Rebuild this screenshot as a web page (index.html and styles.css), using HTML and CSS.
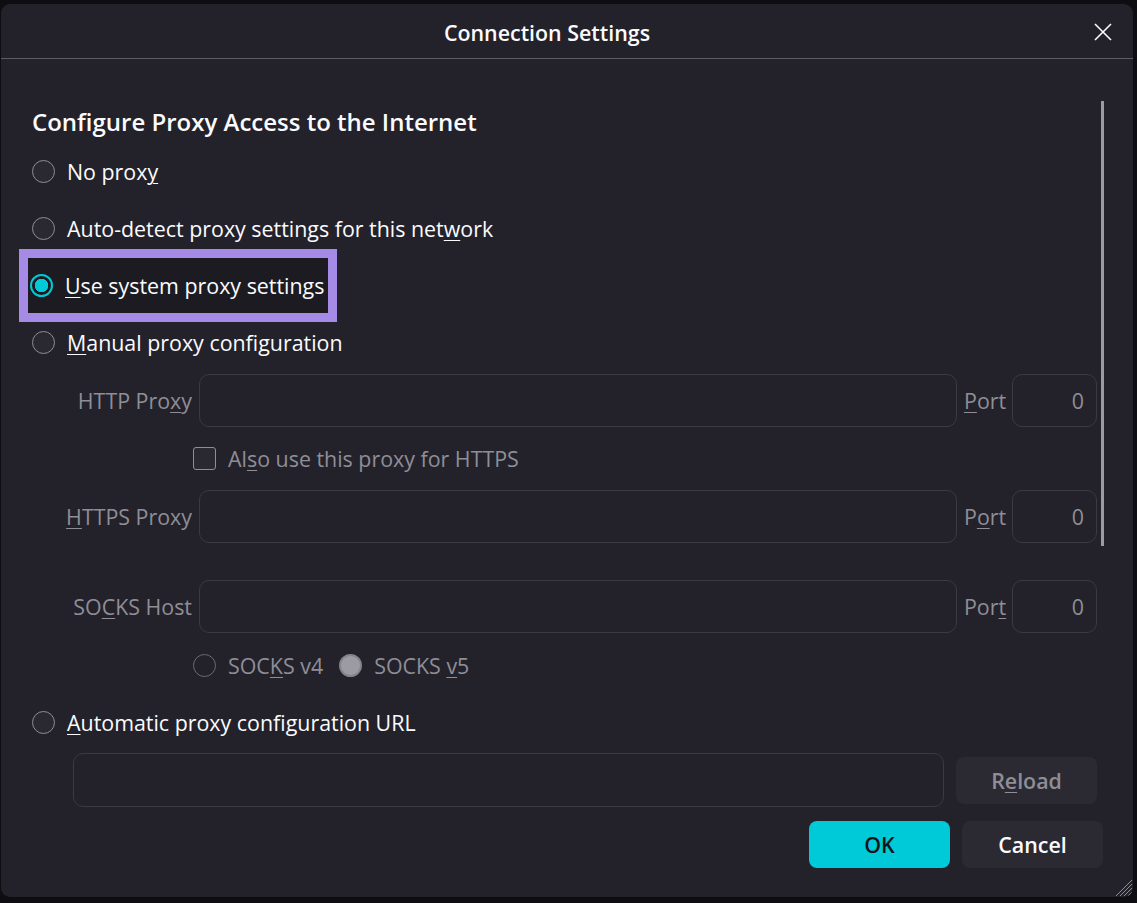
FILE: index.html
```html
<!DOCTYPE html>
<html lang="en">
<head>
<meta charset="utf-8">
<title>Connection Settings</title>
<link rel="stylesheet" href="styles.css">
</head>
<body>
<div class="dialog">
  <header class="titlebar">
    <h1 class="title">Connection Settings</h1>
    <button class="close" aria-label="Close">
      <svg width="20" height="20" viewBox="0 0 20 20"><path d="M2 2L18 18M18 2L2 18" stroke="#fbfbfe" stroke-width="1.6" fill="none"/></svg>
    </button>
  </header>

  <div class="body">
    <div class="content">
      <h2 class="heading">Configure Proxy Access to the Internet</h2>

      <label class="choice"><span class="radio"></span><span>No prox<u>y</u></span></label>
      <label class="choice"><span class="radio"></span><span>Auto-detect proxy settings for this net<u>w</u>ork</span></label>
      <div class="choice">
        <label class="focus-ring"><span class="radio checked"></span><span><u>U</u>se system proxy settings</span></label>
      </div>
      <label class="choice"><span class="radio"></span><span><u>M</u>anual proxy configuration</span></label>

      <div class="proxy-row first">
        <span class="field-label">HTTP Pro<u>x</u>y</span>
        <span class="input"></span>
        <span class="port-label"><u>P</u>ort</span>
        <span class="input port">0</span>
      </div>
      <div class="check-row">
        <span class="checkbox"></span><span>Al<u>s</u>o use this proxy for HTTPS</span>
      </div>
      <div class="proxy-row">
        <span class="field-label"><u>H</u>TTPS Proxy</span>
        <span class="input"></span>
        <span class="port-label">P<u>o</u>rt</span>
        <span class="input port">0</span>
      </div>
      <div class="proxy-row socks">
        <span class="field-label">SO<u>C</u>KS Host</span>
        <span class="input"></span>
        <span class="port-label">Por<u>t</u></span>
        <span class="input port">0</span>
      </div>
      <div class="version-row">
        <span class="radio small"></span><span>SOC<u>K</u>S v4</span>
        <span class="radio small filled"></span><span>SOCKS <u>v</u>5</span>
      </div>

      <label class="choice auto"><span class="radio"></span><span><u>A</u>utomatic proxy configuration URL</span></label>
      <div class="url-row">
        <span class="input url"></span>
        <span class="btn disabled">R<u>e</u>load</span>
      </div>
    </div>
    <div class="scrollbar"></div>
  </div>

  <footer class="actions">
    <button class="btn primary">OK</button>
    <button class="btn">Cancel</button>
  </footer>

  <svg class="grip" width="18" height="18" viewBox="0 0 18 18">
    <path d="M17 5L5 17M17 9L9 17M17 13L13 17M17 1L1 17" stroke="#8f8e96" stroke-width="1" fill="none"/>
  </svg>
</div>
</body>
</html>
```

FILE: styles.css
```css
* { box-sizing: border-box; }

html, body {
  margin: 0;
  height: 100%;
}

body {
  background: #0e0d12;
  font-family: "Open Sans", "Noto Sans", sans-serif;
  color: #fbfbfe;
  padding: 4px 4px 6px 1px;
}

.dialog {
  position: relative;
  height: 893px;
  background: #23222b;
  border-radius: 9px;
  display: flex;
  flex-direction: column;
  overflow: hidden;
}

/* title bar */
.titlebar {
  height: 55px;
  flex: none;
  border-bottom: 1px solid #5d5c65;
  display: flex;
  align-items: center;
  justify-content: center;
  padding-right: 40px;
  position: relative;
}

.title {
  margin: 0;
  font-size: 21.4px;
  font-weight: 600;
  padding-top: 2px;
}

.close {
  position: absolute;
  right: 20px;
  top: 18px;
  width: 20px;
  height: 20px;
  padding: 0;
  border: 0;
  background: none;
  display: flex;
}

/* scrolling body */
.body {
  position: relative;
  flex: none;
  height: 752px;
}

.content {
  padding: 48px 36px 0 31px;
  font-size: 21.4px;
}

.scrollbar {
  position: absolute;
  left: 1100px;
  top: 42px;
  width: 3px;
  height: 445px;
  background: #9c9ba3;
}

.heading {
  margin: 0;
  height: 36px;
  font-size: 24px;
  font-weight: 600;
  line-height: 30px;
}

u {
  text-decoration-thickness: 1px;
  text-underline-offset: 3px;
}

/* radio rows */
.choice {
  height: 57px;
  display: flex;
  align-items: center;
  gap: 12px;
}

.choice.auto {
  height: 50px;
}

.radio {
  width: 23px;
  height: 23px;
  flex: none;
  border-radius: 50%;
  border: 1.5px solid #8f8e96;
  background: #2a2932;
}

.radio.checked {
  border: 2px solid #00c9d8;
  background: radial-gradient(circle, #00c9d8 0 6.5px, #1c1b22 7px);
}

.focus-ring {
  display: flex;
  align-items: center;
  gap: 12px;
  margin-left: -13px;
  padding: 0 12px 0 2px;
  height: 73px;
  border: 9px solid #a58be6;
  background: #1c1b22;
  width: 318px;
  white-space: nowrap;
}

/* manual proxy fields */
.proxy-row {
  display: grid;
  grid-template-columns: 160px 1fr 41px 85px;
  align-items: center;
  column-gap: 7px;
  height: 53px;
  color: #8f8e96;
}

.proxy-row.first { margin-top: 3px; }
.proxy-row.socks { margin-top: 37px; }

.field-label {
  text-align: right;
  white-space: nowrap;
}

.port-label {
  white-space: nowrap;
}

.input {
  height: 53px;
  border: 1px solid #3b3a43;
  border-radius: 10px;
  background: #23222b;
}

.input.port {
  display: flex;
  align-items: center;
  justify-content: flex-end;
  padding-right: 12px;
  color: #8f8e96;
}

.check-row,
.version-row {
  height: 63px;
  display: flex;
  align-items: center;
  padding-left: 161px;
  gap: 12px;
  color: #8f8e96;
}

.version-row { height: 64px; }

.checkbox {
  width: 23px;
  height: 23px;
  border: 1.5px solid #8f8e96;
  border-radius: 3px;
  background: #2a2932;
}

.radio.small {
  border-color: #6c6b73;
  background: #23222b;
}

.radio.filled {
  margin-left: 4px;
  border: 2px solid #85848c;
  background: #9c9ba3;
}

.url-row {
  margin-top: 6px;
  padding-left: 41px;
  display: flex;
  align-items: center;
  gap: 12px;
}

.input.url {
  flex: 1;
  height: 54px;
}

/* buttons */
.btn {
  width: 141px;
  height: 47px;
  border: 0;
  border-radius: 8px;
  background: #2b2a33;
  color: #fbfbfe;
  font-family: inherit;
  font-size: 21.4px;
  font-weight: 600;
  display: flex;
  align-items: center;
  justify-content: center;
}

.btn.disabled {
  color: #8f8e96;
}

.btn.primary {
  background: #00c9d8;
  color: #15141a;
}

.actions {
  display: flex;
  justify-content: flex-end;
  gap: 12px;
  padding: 10px 30px 0 0;
}

.grip {
  position: absolute;
  right: 0;
  bottom: 0;
}
```
